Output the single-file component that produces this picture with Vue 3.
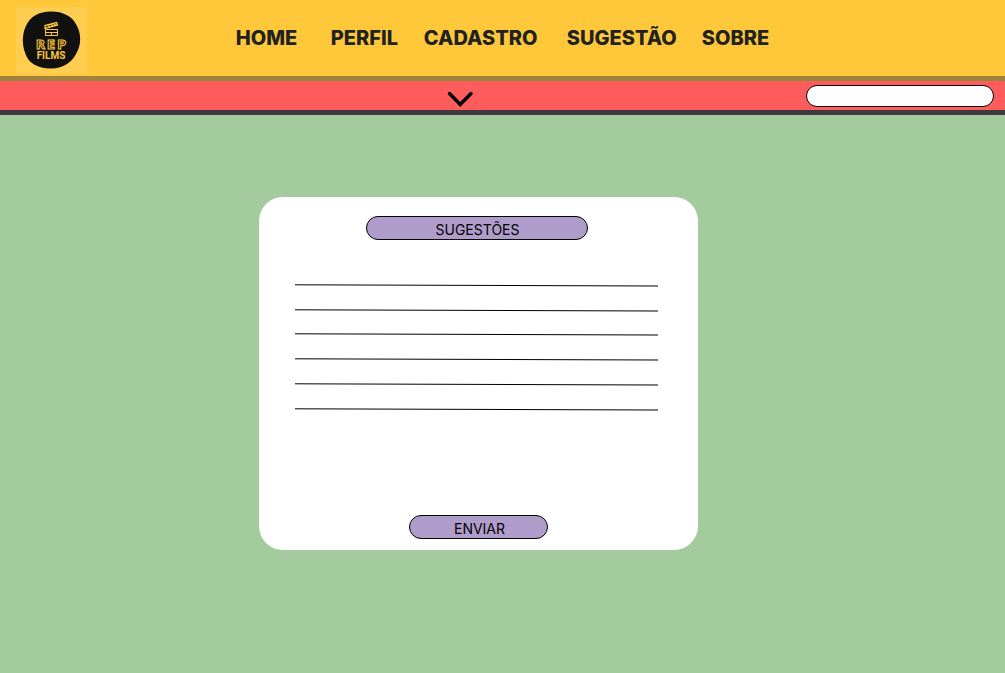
<script setup>
import { ref } from 'vue'

const links = ['HOME', 'PERFIL', 'CADASTRO', 'SUGESTÃO', 'SOBRE']
const rules = [1, 26, 50, 75, 100, 125]
const search = ref('')
const suggestion = ref('')
</script>

<template>
  <div class="page">
    <header class="header">
      <a class="brand" href="#" aria-label="REP FILMS">
        <svg class="logo" width="71" height="67" viewBox="0 0 71 67">
          <path
            d="M35 4.500C47 4.500 56 9 60.500 18C65 26 65.500 36 61.500 44C57 55 47 62 34 61.500C22 61 13 57 9.500 47C6 38 6 28 9.500 20C14 9 23 4.500 35 4.500Z"
            fill="#111"
          />
          <g fill="none" stroke="#ffc83a" stroke-width="1">
            <path d="M29.500 22.500H41.500V28.500H29.500ZM29.500 25.500H41.500M35.500 25.500V28.500" />
            <path d="M29 21.500V18.500L40.500 15.500L41.500 18L29 21.500ZM31.500 18L34 20M34.500 17L37 19M37.500 16.500L40 18.500" stroke-width="1.300" />
          </g>
          <text class="logo-rep" x="36" y="42">REP</text>
          <text class="logo-films" x="35" y="52">FILMS</text>
        </svg>
      </a>
      <nav class="nav">
        <a v-for="link in links" :key="link" href="#">{{ link }}</a>
      </nav>
    </header>

    <div class="toolbar">
      <button class="toggle" type="button" aria-label="Abrir menu">
        <svg width="28" height="18" viewBox="0 0 28 18">
          <path d="M3.500 3.500L14.200 14.500L25 3.500" fill="none" stroke="#000" stroke-width="3.500" stroke-linecap="round" />
        </svg>
      </button>
      <input v-model="search" class="search" type="search" aria-label="Buscar" />
    </div>

    <main class="main">
      <form class="card" @submit.prevent>
        <h1 class="pill title"><label for="suggestion">SUGESTÕES</label></h1>
        <div class="sheet">
          <svg class="rules" viewBox="0 0 363 128" preserveAspectRatio="none" aria-hidden="true">
            <line v-for="y in rules" :key="y" x1="0" :y1="y - 0.2" x2="363" :y2="y + 1" />
          </svg>
          <textarea id="suggestion" v-model="suggestion"></textarea>
        </div>
        <button class="pill send" type="submit">ENVIAR</button>
      </form>
    </main>
  </div>
</template>

<style>
body {
  margin: 0;
}
</style>

<style scoped>
.page {
  min-height: 100vh;
  display: flex;
  flex-direction: column;
  background: #a4cb9e;
  font-family: Inter, sans-serif;
}

.header {
  display: grid;
  grid-template-columns: 1fr auto 1fr;
  align-items: center;
  height: 76px;
  padding: 0 16px;
  background: #ffc83a;
  border-bottom: 5px solid #a0833b;
}

.brand {
  display: block;
  width: 71px;
  height: 67px;
  margin-top: 4px;
  background: #ffcd50;
}

.logo {
  display: block;
}

.logo-rep {
  font: 700 12px "DejaVu Sans", sans-serif;
  text-anchor: middle;
  letter-spacing: 2px;
  fill: #111;
  stroke: #ffc83a;
  stroke-width: 1px;
}

.logo-films {
  font: 700 10px Roboto, sans-serif;
  text-anchor: middle;
  fill: #ffc83a;
}

.nav {
  display: grid;
  grid-template-columns: 95px 93px 143px 135px auto;
}

.nav a {
  color: #222;
  font-size: 20px;
  font-weight: 800;
  line-height: 24px;
  text-decoration: none;
}

.toolbar {
  display: flex;
  align-items: center;
  height: 29px;
  padding: 0 11px 0 113px;
  background: #ff5d5d;
  border-bottom: 5px solid #3e3a3c;
}

.toggle {
  display: block;
  margin: 6px auto 0;
  padding: 0;
  border: 0;
  background: none;
  cursor: pointer;
}

.toggle svg {
  display: block;
}

.search {
  box-sizing: border-box;
  width: 188px;
  height: 22px;
  padding: 0 12px;
  border: 1px solid #000;
  border-radius: 11px;
  background: #fff;
  font: 14px Inter, sans-serif;
  appearance: none;
}

.main {
  display: flex;
  justify-content: center;
  padding: 82px 48px 48px 0;
}

.card {
  box-sizing: border-box;
  display: flex;
  flex-direction: column;
  align-items: center;
  width: 439px;
  padding: 19px 36px 11px;
  border-radius: 24px;
  background: #fff;
}

.pill {
  box-sizing: border-box;
  height: 24px;
  margin: 0;
  padding: 2px 0 0 2px;
  border: 1px solid #000;
  border-radius: 12px;
  background: #b09ccb;
  color: #000;
  font: 400 14px/22px Inter, sans-serif;
  text-align: center;
}

.title {
  width: 222px;
  margin-right: 4px;
}

.send {
  width: 139px;
  cursor: pointer;
}

.sheet {
  display: grid;
  align-self: stretch;
  margin: 44px 4px 103px 0;
}

.rules,
.sheet textarea {
  grid-area: 1 / 1;
  box-sizing: border-box;
  width: 100%;
  height: 128px;
}

.rules line {
  stroke: #000;
  stroke-width: 1px;
}

.sheet textarea {
  padding: 0 4px;
  border: 0;
  background: transparent;
  font: 14px/25px Inter, sans-serif;
  resize: none;
}
</style>
